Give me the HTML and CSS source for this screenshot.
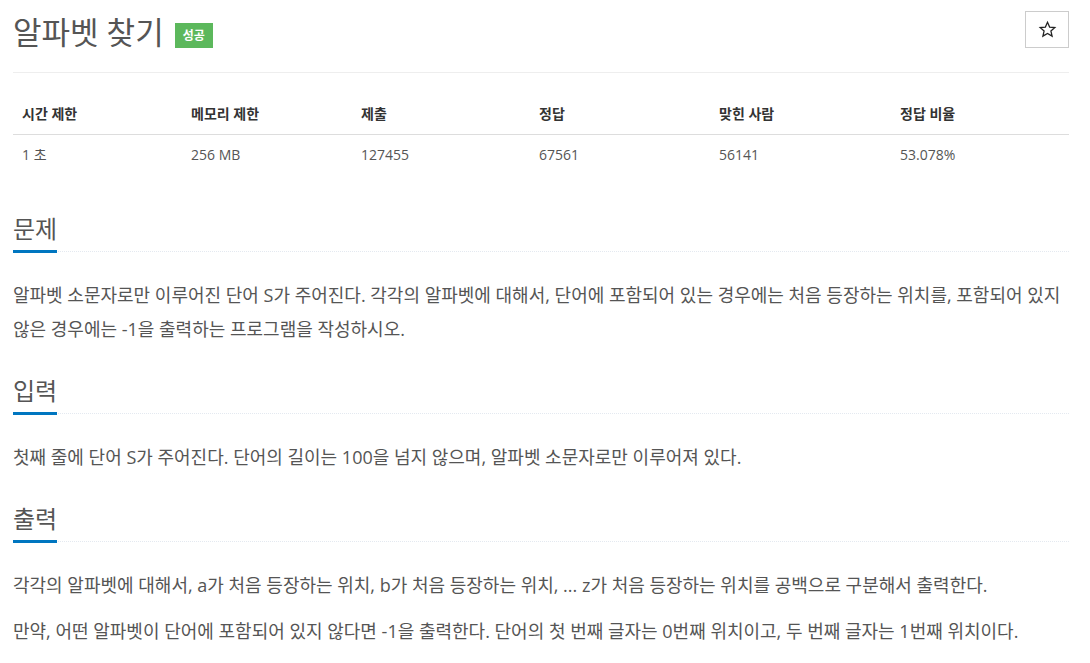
FILE: index.html
```html
<!DOCTYPE html>
<html lang="ko">
<head>
<meta charset="utf-8">
<title>알파벳 찾기</title>
<link rel="stylesheet" href="styles.css">
</head>
<body>
<div class="page">
  <div class="page-header">
    <h1 class="title">알파벳 찾기<span class="badge">성공</span></h1>
    <button class="star" type="button" aria-label="즐겨찾기">
      <svg width="19" height="19" viewBox="0 0 24 24"><path d="M12 2.8l2.7 6.1 6.6.6-5 4.4 1.5 6.5L12 17l-5.8 3.4 1.5-6.5-5-4.4 6.6-.6z" fill="none" stroke="#222" stroke-width="1.6" stroke-linejoin="miter"/></svg>
    </button>
  </div>
  <table class="info">
    <thead>
      <tr><th class="c1">시간 제한</th><th class="c2">메모리 제한</th><th class="c3">제출</th><th class="c4">정답</th><th class="c5">맞힌 사람</th><th>정답 비율</th></tr>
    </thead>
    <tbody>
      <tr><td>1 초</td><td>256 MB</td><td>127455</td><td>67561</td><td>56141</td><td>53.078%</td></tr>
    </tbody>
  </table>

  <section class="section">
    <div class="headline"><h2>문제</h2></div>
    <p>알파벳 소문자로만 이루어진 단어 S가 주어진다. 각각의 알파벳에 대해서, 단어에 포함되어 있는 경우에는 처음 등장하는 위치를, 포함되어 있지 않은 경우에는 -1을 출력하는 프로그램을 작성하시오.</p>
  </section>
  <section class="section">
    <div class="headline"><h2>입력</h2></div>
    <p>첫째 줄에 단어 S가 주어진다. 단어의 길이는 100을 넘지 않으며, 알파벳 소문자로만 이루어져 있다.</p>
  </section>
  <section class="section">
    <div class="headline"><h2>출력</h2></div>
    <p>각각의 알파벳에 대해서, a가 처음 등장하는 위치, b가 처음 등장하는 위치, ... z가 처음 등장하는 위치를 공백으로 구분해서 출력한다.</p>
    <p>만약, 어떤 알파벳이 단어에 포함되어 있지 않다면 -1을 출력한다. 단어의 첫 번째 글자는 0번째 위치이고, 두 번째 글자는 1번째 위치이다.</p>
  </section>
</div>
</body>
</html>
```

FILE: styles.css
```css
* { box-sizing: border-box; }
html, body { margin: 0; padding: 0; background: #fff; }
body {
  font-family: "Open Sans", "Noto Sans CJK KR", sans-serif;
  color: #555;
  font-size: 14px;
}
.page { padding: 0 21px 0 13px; }
.page-header {
  display: flex;
  justify-content: space-between;
  align-items: flex-start;
  padding-top: 11px;
  height: 73px;
  border-bottom: 1px solid #eee;
}
.title {
  margin: 0;
  font-size: 31px;
  font-weight: 400;
  line-height: 42px;
  color: #555;
  display: flex;
  align-items: center;
}
.badge {
  display: inline-block;
  margin-left: 11px;
  margin-top: 7px;
  background: #5cb85c;
  color: #fff;
  font-size: 12px;
  font-weight: 700;
  line-height: 25px;
  padding: 0 8px;
}
.star {
  width: 44px;
  height: 37px;
  background: #fff;
  border: 1px solid #ccc;
  border-radius: 0;
  display: flex;
  align-items: center;
  justify-content: center;
  padding: 0;
}
.info {
  width: 100%;
  border-collapse: collapse;
  table-layout: fixed;
  margin-top: 23px;
}
.info th {
  text-align: left;
  font-weight: 700;
  color: #333;
  padding: 8px 9px 10px;
  line-height: 20px;
  border-bottom: 1px solid #ddd;
}
.info td {
  padding: 10px 9px 8px;
  line-height: 20px;
  color: #555;
}
.c1 { width: 169px; }
.c2 { width: 170px; }
.c3 { width: 178px; }
.c4 { width: 180px; }
.c5 { width: 181px; }
.section { margin-top: 28px; }
.section:first-of-type { margin-top: 39px; }
.headline {
  border-bottom: 1px dotted #e4e9f0;
  margin-bottom: 26px;
}
.headline h2 {
  display: inline-block;
  margin: 0 0 -2px;
  font-size: 24px;
  font-weight: 400;
  line-height: 34px;
  color: #555;
  padding-bottom: 4px;
  border-bottom: 3px solid #0076c0;
}
.section p {
  margin: 0 0 12px;
  font-size: 18px;
  line-height: 34px;
}
```
